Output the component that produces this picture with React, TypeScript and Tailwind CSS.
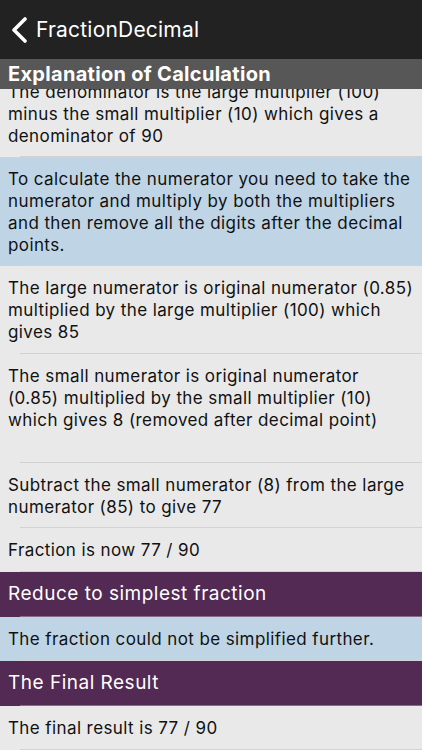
import React from "react";

const rows: { text: string[]; blue?: boolean }[] = [
  { text: ["The denominator is the large multiplier (100)", "minus the small multiplier (10) which gives a", "denominator of 90"] },
  {
    text: [
      "To calculate the numerator you need to take the",
      "numerator and multiply by both the multipliers",
      "and then remove all the digits after the decimal",
      "points.",
    ],
    blue: true,
  },
  { text: ["The large numerator is original numerator (0.85)", "multiplied by the large multiplier (100) which", "gives 85"] },
  {
    text: ["The small numerator is original numerator", "(0.85) multiplied by the small multiplier (10)", "which gives 8 (removed after decimal point)", "\u00a0"],
  },
  { text: ["Subtract the small numerator (8) from the large", "numerator (85) to give 77"] },
  { text: ["Fraction is now 77 / 90"] },
];

function Row({ lines, blue }: { lines: string[]; blue?: boolean }) {
  return (
    <div className={blue ? "bg-[#bfd5e6]" : "bg-[#e9e9e9]"}>
      <div className="px-[8px] pt-[11px] pb-[9.4px] text-[17px] leading-[22px] tracking-[0.4px] text-[#111]">
        {lines.map((l, i) => (
          <div key={i} className="whitespace-nowrap">{l}</div>
        ))}
      </div>
      <div className="ml-[20px] h-px bg-[#d2d2d2]" />
    </div>
  );
}

function PurpleHeader({ title }: { title: string }) {
  return (
    <div className="bg-[#532a53]">
      <div className="h-[44.6px] px-[8px] flex items-center text-[19px] tracking-[0.5px] text-white">{title}</div>
      <div className="ml-[20px] h-px bg-[#8a6a8a]" />
    </div>
  );
}

export default function App() {
  return (
    <div
      className="w-[422px] h-[750px] overflow-hidden bg-[#e9e9e9]"
      style={{ fontFamily: "Inter, 'Noto Sans', sans-serif" }}
    >
      <div className="h-[59px] bg-[#222222] flex items-center pl-[10px]">
        <svg width="20" height="26" viewBox="0 0 20 26" className="mr-[6px]">
          <path d="M15 2 L4 13 L15 24" fill="none" stroke="white" strokeWidth="3.6" strokeLinecap="round" strokeLinejoin="round" />
        </svg>
        <span className="text-white text-[21px] tracking-[0.2px]">FractionDecimal</span>
      </div>
      <div className="relative z-10 h-[30px] bg-[#575757] px-[8px] flex items-center text-white text-[20px] tracking-[0.3px] font-bold">
        Explanation of Calculation
      </div>
      <div className="-mt-[19.5px]">
        {rows.map((r, i) => (
          <Row key={i} lines={r.text} blue={r.blue} />
        ))}
        <PurpleHeader title="Reduce to simplest fraction" />
        <Row lines={["The fraction could not be simplified further."]} blue />
        <PurpleHeader title="The Final Result" />
        <Row lines={["The final result is 77 / 90"]} />
      </div>
    </div>
  );
}
